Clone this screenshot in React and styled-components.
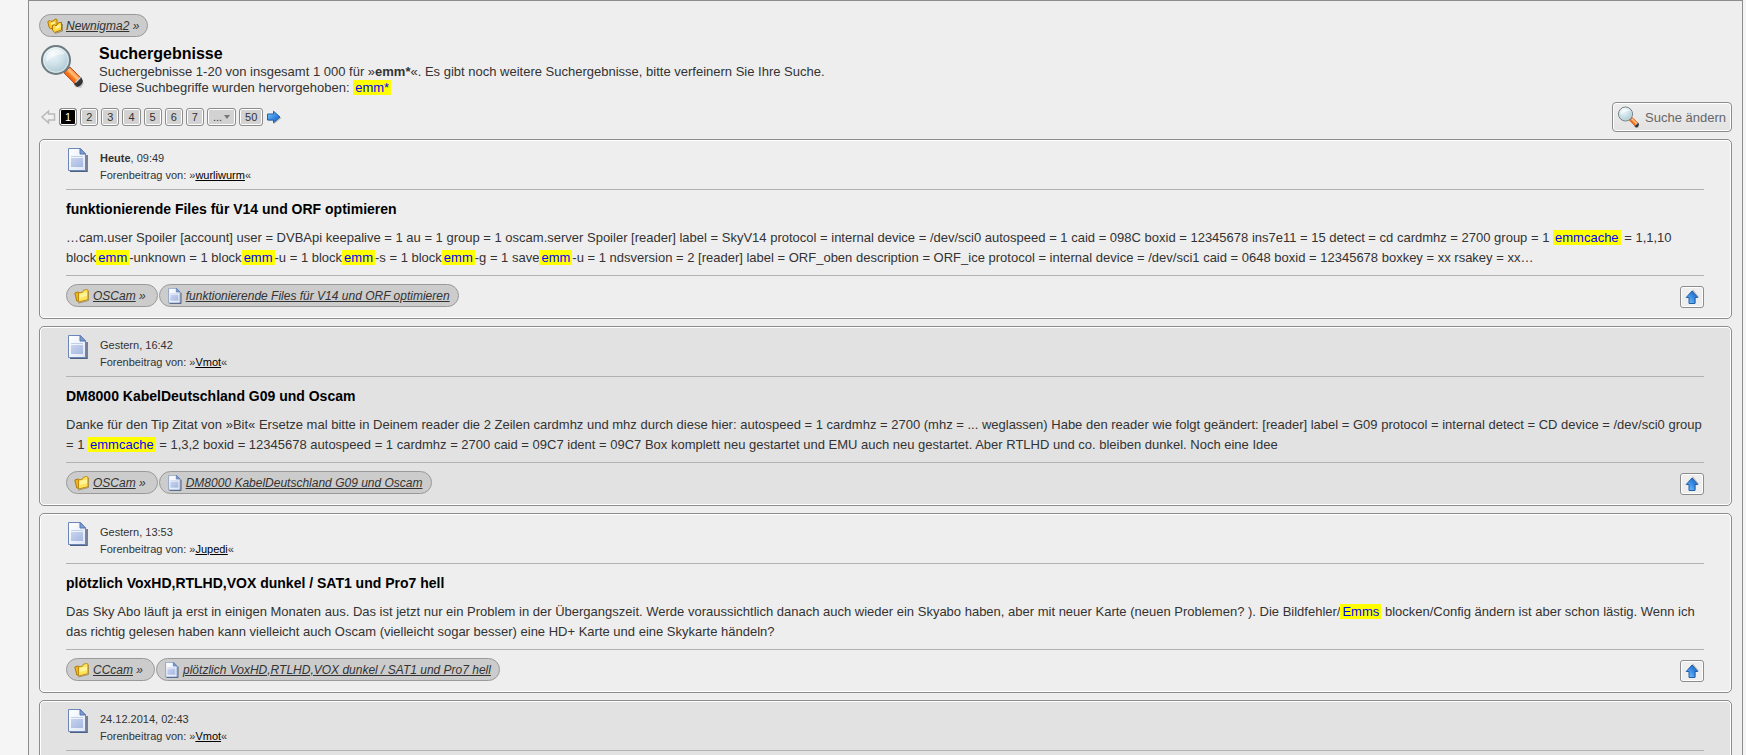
import React from "react";
import styled, { createGlobalStyle } from "styled-components";

const App = () => {
  return (
    <>
      <GlobalStyle />
      <Main>
        <PillRow>
          <Pill>
            <FoldersIcon />
            <span><a href="#index">Newnigma2</a> »</span>
          </Pill>
        </PillRow>

        <Headline>
          <Magnifier size={48} />
          <div>
            <h1>Suchergebnisse</h1>
            <p>
              Suchergebnisse 1-20 von insgesamt 1 000 für »<b>emm*</b>«. Es gibt
              noch weitere Suchergebnisse, bitte verfeinern Sie Ihre Suche.
            </p>
            <p>
              Diese Suchbegriffe wurden hervorgehoben: <Mark>emm*</Mark>
            </p>
          </div>
        </Headline>

        <Toolbar>
          <Pages aria-label="Seiten">
            <Arrow direction="left" disabled />
            <PageLink href="#p1" $active>1</PageLink>
            {[2, 3, 4, 5, 6, 7].map((n) => (
              <PageLink key={n} href={`#p${n}`}>{n}</PageLink>
            ))}
            <PageButton type="button">...<Caret /></PageButton>
            <PageLink href="#p50">50</PageLink>
            <Arrow direction="right" />
          </Pages>
          <SearchButton type="button">
            <Magnifier size={24} />
            Suche ändern
          </SearchButton>
        </Toolbar>

        {results.map((result, i) => (
          <Result key={result.time} {...result} odd={i % 2 === 1} />
        ))}
      </Main>
    </>
  );
};

const Result = ({ day, today, time, author, title, text, board, odd }) => (
  <Card $odd={odd}>
    <CardHead>
      <PostIcon size={24} />
      <div>
        <p>{today ? <b>{day}</b> : day}, {time}</p>
        <p>Forenbeitrag von: »<a href="#user">{author}</a>«</p>
      </div>
    </CardHead>
    {title && (
      <>
        <h2>{title}</h2>
        <Message>{text}</Message>
        <CardFoot>
          <PillRow>
            <Pill $wide>
              <FolderIcon />
              <span><a href="#board">{board}</a> »</span>
            </Pill>
            <Pill>
              <PostIcon size={16} />
              <a href="#thread">{title}</a>
            </Pill>
          </PillRow>
          <UpLink href="#top" aria-label="Zum Seitenanfang">
            <Arrow direction="up" />
          </UpLink>
        </CardFoot>
      </>
    )}
  </Card>
);

const Magnifier = ({ size }) => (
  <svg width={size} height={size} viewBox="0 0 48 48" aria-hidden="true">
    <defs>
      <radialGradient id="lens" cx="38%" cy="28%" r="75%">
        <stop offset="0" stopColor="#eef7fa" />
        <stop offset="0.5" stopColor="#cfe2e9" />
        <stop offset="1" stopColor="#a9c6d2" />
      </radialGradient>
      <linearGradient id="handle" x1="0" y1="1" x2="1" y2="0">
        <stop offset="0.25" stopColor="#d94a08" />
        <stop offset="0.45" stopColor="#fb7a1c" />
        <stop offset="0.55" stopColor="#ffc684" />
        <stop offset="0.7" stopColor="#f4651a" />
      </linearGradient>
    </defs>
    <path d="M28 28l17 13-3 5-6-1z" fill="#777" opacity=".35" />
    <path d="M25 23l6 4-4 5-5-6z" fill="#bbb" stroke="#888" />
    <path d="M31 25L43 37 37 43 25 31z" fill="url(#handle)" stroke="#b4552a" />
    <path d="M42 35l2 4q-1 5-6 6l-3-3z" fill="#333" />
    <path d="M36 40l5-5 1 1-5 5z" fill="#c9c9c9" />
    <circle cx="17" cy="18" r="14" fill="url(#lens)" stroke="#6e7c80" strokeWidth="2" />
    <circle cx="17" cy="18" r="12.3" fill="none" stroke="#fff" strokeOpacity=".55" />
    <path d="M7 17q1-9 10-10 6 0 9 5-12 0-18 8z" fill="#fff" opacity=".5" />
  </svg>
);

const PostIcon = ({ size }) => (
  <svg width={size} height={size} viewBox="0 0 24 24" aria-hidden="true">
    <defs>
      <linearGradient id="sheet" x1="0" y1="0" x2="1" y2="1">
        <stop offset="0" stopColor="#fff" />
        <stop offset="1" stopColor="#dde6f7" />
      </linearGradient>
      <linearGradient id="block" x1="0" y1="0" x2="1" y2="1">
        <stop offset="0" stopColor="#c8d4ef" />
        <stop offset="1" stopColor="#a6b8e0" />
      </linearGradient>
    </defs>
    <path d="M4 23.300h17V7" fill="none" stroke="#4f5f7d" strokeWidth="1.500" />
    <path d="M2.500.5h12l5 5.500V22.500h-17z" fill="url(#sheet)" stroke="#6b86b8" />
    <path d="M14 .5V6H19.500z" fill="#7f9fd3" stroke="#5474ad" />
    <path d="M5 8.500h12" stroke="#c3d0ea" />
    <path d="M5 10h12v9H5z" fill="url(#block)" />
  </svg>
);

const FolderIcon = () => (
  <svg width="16" height="16" viewBox="0 0 16 16" aria-hidden="true">
    <path d="M4 15.200l10.500-2.700V3" fill="none" stroke="#85734b" opacity=".6" />
    <path d="M.8 5L4 4l2 1v8.500L2.800 13z" fill="#f0b51e" stroke="#b17b08" />
    <path d="M4.500 5l4-.8 1-2 3-.7 1.500.7v9.500L4.500 14z" fill="#ffe45c" stroke="#c08c10" />
    <path d="M5.500 6l7.500-1.500V8L5.500 10z" fill="#fff8a8" opacity=".8" />
  </svg>
);

const FoldersIcon = () => (
  <svg width="16" height="16" viewBox="0 0 16 16" aria-hidden="true">
    <path d="M8 15.500l7.500-2.500V6" fill="none" stroke="#85734b" opacity=".7" />
    <path d="M.8 3.500L3 2.500l1 1 3-1L8 1l2 .5V8L3.500 11 2 9z" fill="#f7c52b" stroke="#b17b08" />
    <path d="M5.500 7.500l2-.8L9 8l2-3 3.500-.7V12L7.500 14.500 5.500 12z" fill="#ffd93f" stroke="#a87406" />
    <path d="M8.500 8.500l5-2V9l-5 2z" fill="#fff59b" />
    <path d="M4 5l4-1.500V5.500L4 7z" fill="#fff59b" />
  </svg>
);

const turns = { right: 0, up: -90, left: 180 };

const Arrow = ({ direction, disabled }) => (
  <svg width="16" height="16" viewBox="0 0 16 16" aria-hidden="true">
    <defs>
      <linearGradient id="arrow" x1="0" y1="0" x2="1" y2="1">
        <stop offset="0" stopColor="#8ccdff" />
        <stop offset="0.5" stopColor="#3b8de6" />
        <stop offset="1" stopColor="#1259b8" />
      </linearGradient>
    </defs>
    <g transform={`rotate(${turns[direction]} 8 8)`}>
      {!disabled && (
        <path d="M2 6h6V3L15.500 9 8 15v-3H2z" fill="#666" opacity=".4" />
      )}
      <path
        d="M1.500 5h6V2.200L14 8l-6.500 5.800V11h-6z"
        fill={disabled ? "#f0f0f0" : "url(#arrow)"}
        stroke={disabled ? "#b9b9b9" : "#2460a8"}
        strokeWidth={disabled ? 1.5 : 1}
      />
    </g>
  </svg>
);

const Caret = () => (
  <svg width="6" height="4" viewBox="0 0 6 4" aria-hidden="true">
    <path d="M0 0h6L3 4z" fill="#777" />
  </svg>
);

const GlobalStyle = createGlobalStyle`
  body {
    margin: 0;
    background: #f5f5f5;
    color: #333;
    font-family: "Liberation Sans", Arial, sans-serif;
    font-size: 13px;
    line-height: 16px;
  }

  h1, h2, p {
    margin: 0;
  }
`;

const Main = styled.main`
  margin: 0 3px 0 28px;
  padding: 13px 10px 0;
  border: 1px solid #8c8c8c;
  border-bottom: 0;
  background: #eee;
`;

const PillRow = styled.div`
  display: flex;
  gap: 1px;
`;

const Pill = styled.span`
  display: flex;
  align-items: center;
  gap: 3px;
  height: 21px;
  padding: 0 ${({ $wide }) => ($wide ? "11px" : "8px")} 0 7px;
  border: 1px solid #999;
  border-radius: 12px;
  background: #ccc;
  font-size: 12px;
  font-style: italic;

  a {
    color: #333;
  }
`;

const Headline = styled.header`
  display: flex;
  gap: 12px;
  margin-top: 5px;

  h1 {
    padding-top: 1px;
    color: #000;
    font-size: 16px;
    line-height: 21px;
  }
`;

const Mark = styled.mark`
  padding: 0 2px;
  background: #ff0;
  color: #00f;
`;

const Toolbar = styled.div`
  display: flex;
  align-items: center;
  justify-content: space-between;
  margin: 6px 0 7px;
`;

const Pages = styled.nav`
  display: flex;
  align-items: center;
  gap: 3px;
  padding-left: 1px;
`;

const PageLink = styled.a`
  box-sizing: border-box;
  min-width: 18px;
  height: 18px;
  padding: 0 5px;
  border: 1px solid #8c8c8c;
  border-radius: 3px;
  box-shadow: inset 0 0 0 1px #fff;
  background: ${({ $active }) => ($active ? "#000" : "#d2d2d2")};
  color: ${({ $active }) => ($active ? "#fff" : "#333")};
  font-family: inherit;
  font-size: 11px;
  line-height: 16px;
  text-align: center;
  text-decoration: none;
`;

const PageButton = styled(PageLink).attrs({ as: "button" })`
  display: flex;
  align-items: center;
  gap: 2px;
`;

const SearchButton = styled.button`
  display: flex;
  align-items: center;
  gap: 4px;
  height: 30px;
  padding: 0 5px 0 4px;
  border: 1px solid #8c8c8c;
  border-radius: 4px;
  box-shadow: inset 0 0 0 1px #fff;
  background: linear-gradient(#eee, #e2e2e2);
  color: #666;
  font-family: inherit;
  font-size: 13px;
`;

const Card = styled.article`
  margin-bottom: 7px;
  padding: 8px 27px 10px 26px;
  border: 1px solid #8c8c8c;
  border-radius: 5px;
  box-shadow: inset 0 0 0 1px #fff;
  background: ${({ $odd }) => ($odd ? "#e2e2e2" : "#eee")};

  h2 {
    margin-top: 9px;
    color: #000;
    font-size: 14px;
    line-height: 20px;
  }
`;

const CardHead = styled.div`
  display: flex;
  gap: 10px;
  padding-bottom: 5px;
  border-bottom: 1px solid #b2b2b2;
  font-size: 11px;
  line-height: 17px;

  div {
    padding-top: 2px;
  }

  a {
    color: #000;
  }
`;

const Message = styled.p`
  padding: 9px 0 7px;
  border-bottom: 1px solid #b2b2b2;
  line-height: 20px;
`;

const CardFoot = styled.div`
  display: flex;
  align-items: flex-start;
  justify-content: space-between;
  padding-top: 8px;
`;

const UpLink = styled.a`
  display: flex;
  align-items: center;
  justify-content: center;
  width: 22px;
  height: 20px;
  margin-top: 2px;
  border: 1px solid #8c8c8c;
  border-radius: 3px;
  box-shadow: inset 0 0 0 1px #fff;
  background: #eee;
`;

const results = [
  {
    day: "Heute",
    today: true,
    time: "09:49",
    author: "wurliwurm",
    title: "funktionierende Files für V14 und ORF optimieren",
    board: "OSCam",
    text: (
      <>
        …cam.user Spoiler [account] user = DVBApi keepalive = 1 au = 1 group = 1
        oscam.server Spoiler [reader] label = SkyV14 protocol = internal device
        = /dev/sci0 autospeed = 1 caid = 098C boxid = 12345678 ins7e11 = 15
        detect = cd cardmhz = 2700 group = 1 <Mark>emmcache</Mark> = 1,1,10
        <br />
        block<Mark>emm</Mark>-unknown = 1 block<Mark>emm</Mark>-u = 1
        block<Mark>emm</Mark>-s = 1 block<Mark>emm</Mark>-g = 1
        save<Mark>emm</Mark>-u = 1 ndsversion = 2 [reader] label = ORF_oben
        description = ORF_ice protocol = internal device = /dev/sci1 caid = 0648
        boxid = 12345678 boxkey = xx rsakey = xx…
      </>
    ),
  },
  {
    day: "Gestern",
    time: "16:42",
    author: "Vmot",
    title: "DM8000 KabelDeutschland G09 und Oscam",
    board: "OSCam",
    text: (
      <>
        Danke für den Tip Zitat von »Bit« Ersetze mal bitte in Deinem reader die
        2 Zeilen cardmhz und mhz durch diese hier: autospeed = 1 cardmhz = 2700
        (mhz = ... weglassen) Habe den reader wie folgt geändert: [reader] label
        = G09 protocol = internal detect = CD device = /dev/sci0 group
        <br />
        = 1 <Mark>emmcache</Mark> = 1,3,2 boxid = 12345678 autospeed = 1 cardmhz
        = 2700 caid = 09C7 ident = 09C7 Box komplett neu gestartet und EMU auch
        neu gestartet. Aber RTLHD und co. bleiben dunkel. Noch eine Idee
      </>
    ),
  },
  {
    day: "Gestern",
    time: "13:53",
    author: "Jupedi",
    title: "plötzlich VoxHD,RTLHD,VOX dunkel / SAT1 und Pro7 hell",
    board: "CCcam",
    text: (
      <>
        Das Sky Abo läuft ja erst in einigen Monaten aus. Das ist jetzt nur ein
        Problem in der Übergangszeit. Werde voraussichtlich danach auch wieder
        ein Skyabo haben, aber mit neuer Karte (neuen Problemen? ). Die
        Bildfehler/<Mark>Emms</Mark> blocken/Config ändern ist aber schon
        lästig. Wenn ich
        <br />
        das richtig gelesen haben kann vielleicht auch Oscam (vielleicht sogar
        besser) eine HD+ Karte und eine Skykarte händeln?
      </>
    ),
  },
  {
    day: "24.12.2014",
    time: "02:43",
    author: "Vmot",
  },
];

export default App;
